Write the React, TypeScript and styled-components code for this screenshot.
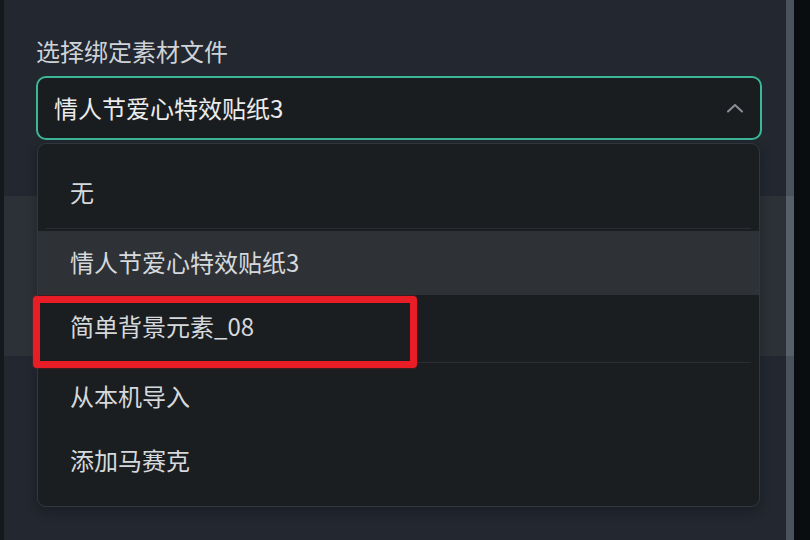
import React from "react";
import styled, { createGlobalStyle } from "styled-components";

const Global = createGlobalStyle`
  html, body { margin: 0; padding: 0; background: #222730; }
  body { font-family: "Noto Sans CJK SC", "Noto Sans", sans-serif; }
  * { box-sizing: border-box; }
`;

const Page = styled.div`
  display: flex;
  width: 810px;
  height: 540px;
  overflow: hidden;
`;

const EdgeStrip = styled.div`
  width: 4px;
  background: #15191d;
`;

const Panel = styled.div`
  flex: 1;
  display: flex;
  flex-direction: column;
`;

const Section = styled.div<{ $h?: number; $tone: "base" | "raised" }>`
  height: ${(p) => (p.$h ? `${p.$h}px` : "auto")};
  flex: ${(p) => (p.$h ? "none" : "1")};
  background: ${(p) => (p.$tone === "raised" ? "#2c3137" : "#222730")};
`;

const Header = styled.div`
  height: 196px;
  padding: 35px 24px 0 32px;
  background: #222730;
  position: relative;
  z-index: 2;
`;

const Label = styled.div`
  font-size: 24px;
  line-height: 32px;
  color: #cfd3d7;
  margin-bottom: 9px;
`;

const Field = styled.div`
  position: relative;
`;

const SelectBox = styled.div`
  height: 64px;
  border: 2px solid #3cb897;
  border-radius: 10px;
  background: #1a1d20;
  display: flex;
  align-items: center;
  justify-content: space-between;
  padding: 0 16px 2px 16px;
  font-size: 24px;
  color: #ececec;
`;

const Chevron = styled.svg`
  width: 18px;
  height: 10px;
  margin-top: 2px;
`;

const Menu = styled.div`
  position: absolute;
  top: 67px;
  left: 1px;
  right: 2px;
  background: #1b1e21;
  border: 1px solid #32373d;
  border-radius: 9px;
  padding: 17px 0 13px;
  box-shadow: 0 4px 12px rgba(0, 0, 0, 0.25);
`;

const Item = styled.div<{ $active?: boolean }>`
  position: relative;
  height: 64px;
  display: flex;
  align-items: center;
  padding: 0 0 3px 32px;
  font-size: 24px;
  color: #d6d9dc;
  background: ${(p) => (p.$active ? "#2e3237" : "transparent")};
`;

const Separator = styled.div`
  height: 1px;
  margin: 3px 8px 2px;
  background: #2a2e33;
`;

const Highlight = styled.div`
  position: absolute;
  left: -5px;
  top: 1px;
  width: 384px;
  height: 72px;
  border: 7px solid #e81d25;
  border-radius: 4px;
  box-shadow: 0 0 2px rgba(232, 29, 37, 0.6);
  pointer-events: none;
`;

const Scrollbar = styled.div`
  width: 8px;
  display: flex;
  flex-direction: column;
  background: #4a535c;
`;

const ScrollSegment = styled.div<{ $h: number; $light?: boolean }>`
  height: ${(p) => p.$h}px;
  background: ${(p) => (p.$light ? "#57606a" : "#4a535c")};
`;

const Gutter = styled.div`
  width: 16px;
  background: #0a0d10;
`;

export default function App() {
  return (
    <>
      <Global />
      <Page>
        <EdgeStrip />
        <Panel>
          <Header>
            <Label>选择绑定素材文件</Label>
            <Field>
              <SelectBox>
                <span>情人节爱心特效贴纸3</span>
                <Chevron viewBox="0 0 18 10">
                  <path
                    d="M2 8.5 L9 2 L16 8.5"
                    fill="none"
                    stroke="#8b9096"
                    strokeWidth="2"
                    strokeLinecap="round"
                    strokeLinejoin="round"
                  />
                </Chevron>
              </SelectBox>
              <Menu>
                <Item>无</Item>
                <Separator />
                <Item $active>情人节爱心特效贴纸3</Item>
                <Item>
                  简单背景元素_08
                  <Highlight />
                </Item>
                <Separator />
                <Item>从本机导入</Item>
                <Item>添加马赛克</Item>
              </Menu>
            </Field>
          </Header>
          <Section $h={160} $tone="raised" />
          <Section $tone="base" />
        </Panel>
        <Scrollbar>
          <ScrollSegment $h={196} />
          <ScrollSegment $h={160} $light />
        </Scrollbar>
        <Gutter />
      </Page>
    </>
  );
}
